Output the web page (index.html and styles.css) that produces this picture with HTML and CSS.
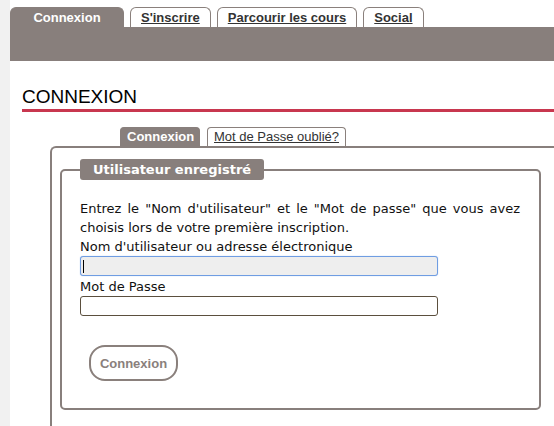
FILE: index.html
```html
<!DOCTYPE html>
<html lang="fr">
<head>
<meta charset="utf-8">
<title>Connexion</title>
<link rel="stylesheet" href="styles.css">
</head>
<body>
<div class="page">
  <div class="side"></div>
  <div class="main">
    <nav class="tabs">
      <span class="tab active">Connexion</span>
      <a class="tab" href="#">S'inscrire</a>
      <a class="tab" href="#">Parcourir les cours</a>
      <a class="tab" href="#">Social</a>
    </nav>
    <div class="band"></div>
    <h1 class="title">CONNEXION</h1>
    <div class="subtabs">
      <span class="subtab active">Connexion</span>
      <a class="subtab" href="#">Mot de Passe oublié?</a>
    </div>
    <div class="box">
      <fieldset class="panel">
        <legend class="legend">Utilisateur enregistré</legend>
        <p class="intro">Entrez le "Nom d'utilisateur" et le "Mot de passe" que vous avez choisis lors de votre première inscription.</p>
        <label class="label" for="user">Nom d'utilisateur ou adresse électronique</label>
        <div class="field focused"><input id="user" class="input" type="text"><span class="caret"></span></div>
        <label class="label" for="pass">Mot de Passe</label>
        <div class="field"><input id="pass" class="input" type="password"></div>
        <button class="btn" type="button">Connexion</button>
      </fieldset>
    </div>
  </div>
</div>
</body>
</html>
```
FILE: styles.css
```css
html, body {
  margin: 0;
  padding: 0;
  background: #fff;
  overflow: hidden;
}
body {
  font-family: "DejaVu Sans", Verdana, sans-serif;
  font-size: 13px;
  color: #111;
}
.page {
  display: flex;
  height: 100vh;
}
.side {
  width: 10px;
  flex: none;
  background: #f1f1f1;
}
.main {
  flex: 1;
  min-width: 0;
  display: flex;
  flex-direction: column;
}
.tabs {
  display: flex;
  gap: 6px;
  padding-top: 7px;
  align-items: flex-end;
  font-family: "Liberation Sans", Arial, sans-serif;
  font-weight: bold;
  font-size: 13px;
}
.tab {
  box-sizing: border-box;
  height: 20px;
  line-height: 19px;
  padding: 0 10px;
  border: 1px solid #8a807c;
  border-bottom: none;
  border-radius: 6px 6px 0 0;
  color: #333;
  background: #fff;
  text-decoration: underline;
}
.tab.active {
  width: 114px;
  text-align: center;
  background: #887f7c;
  border-color: #887f7c;
  color: #fff;
  text-decoration: none;
}
.band {
  height: 34px;
  flex: none;
  background: #887f7c;
}
.title {
  margin: 25px 0 0 12px;
  padding: 0 0 1px;
  font-family: "Liberation Sans", Arial, sans-serif;
  font-weight: normal;
  font-size: 19px;
  line-height: 22px;
  color: #000;
  border-bottom: 3px solid #c8374f;
}
.subtabs {
  display: flex;
  gap: 7px;
  margin: 15px 0 0 110px;
  align-items: flex-end;
  font-family: "Liberation Sans", Arial, sans-serif;
  font-size: 13px;
}
.subtab {
  box-sizing: border-box;
  height: 19px;
  line-height: 18px;
  padding: 0 6px;
  border: 1px solid #8a807c;
  border-bottom: none;
  border-radius: 4px 4px 0 0;
  color: #333;
  background: #fff;
  text-decoration: underline;
}
.subtab.active {
  width: 80px;
  text-align: center;
  background: #887f7c;
  border-color: #887f7c;
  color: #fff;
  font-weight: bold;
  text-decoration: none;
}
.box {
  flex: 1;
  min-height: 0;
  margin-left: 40px;
  border-top: 2px solid #887f7c;
  border-left: 2px solid #887f7c;
  border-top-left-radius: 6px;
  padding: 11px 0 0 8px;
}
.panel {
  box-sizing: border-box;
  width: 481px;
  margin: 0;
  padding: 19px 19px 27px 18px;
  border: 2px solid #887f7c;
  border-radius: 5px;
  min-inline-size: 0;
}
.legend {
  box-sizing: border-box;
  height: 21px;
  line-height: 21px;
  padding: 0 13px;
  background: #887f7c;
  color: #fff;
  font-weight: bold;
  border-radius: 3px;
}
.intro {
  margin: 0;
  line-height: 19px;
  text-align: justify;
}
.label {
  display: block;
  line-height: 19px;
}
.field {
  position: relative;
  width: 358px;
  margin-bottom: 1px;
}
.input {
  display: block;
  box-sizing: border-box;
  width: 358px;
  height: 20px;
  margin: 0;
  padding: 0 3px;
  border: 1px solid #5b4f3e;
  border-radius: 3px;
  background: #fff;
  font: inherit;
  outline: none;
}
.focused .input {
  background: #eeeeee;
  border-color: #6f9de2;
  box-shadow: 0 0 1px #8fb3ea;
}
.caret {
  position: absolute;
  left: 3px;
  top: 4px;
  width: 1px;
  height: 13px;
  background: #000;
}
.btn {
  display: block;
  box-sizing: border-box;
  width: 89px;
  height: 36px;
  margin: 29px 0 0 9px;
  padding: 0;
  border: 2px solid #8a807c;
  border-radius: 16px;
  background: #fff;
  color: #8a807c;
  font-family: "Liberation Sans", Arial, sans-serif;
  font-weight: bold;
  font-size: 13px;
}
```
